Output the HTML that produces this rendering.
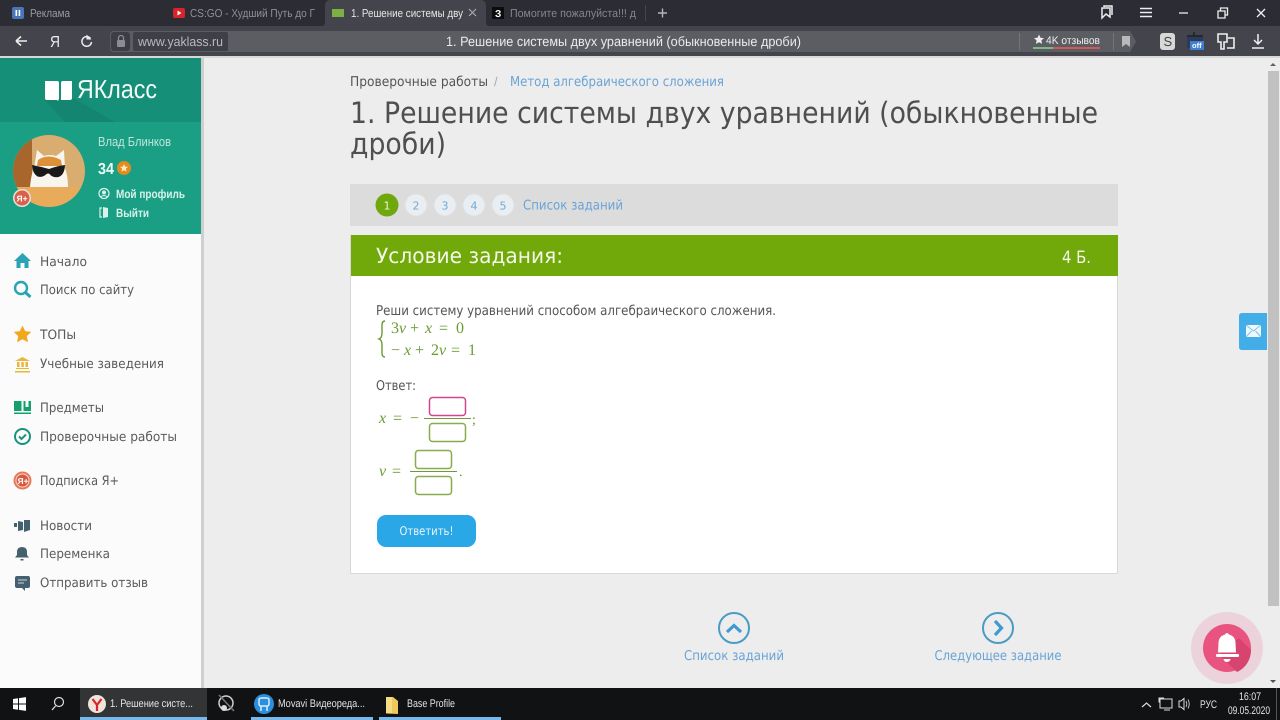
<!DOCTYPE html>
<html><head><meta charset="utf-8"><style>
html,body{margin:0;padding:0;width:1280px;height:720px;overflow:hidden;background:#ededed}
svg{display:block;filter:blur(.3px);text-rendering:geometricPrecision}
text{font-family:"Liberation Sans",sans-serif}
.d{font-family:"DejaVu Sans",sans-serif}
.m{font-family:"Liberation Serif",serif;font-style:italic;fill:#6c9a33}
.r{font-family:"Liberation Serif",serif;fill:#6c9a33}
</style></head><body>
<svg width="1280" height="720" viewBox="0 0 1280 720" xmlns="http://www.w3.org/2000/svg">
<rect width="1280" height="720" fill="#ededed"/>
<!-- tab strip -->
<rect width="1280" height="26" fill="#2c2d34"/>
<rect y="26" width="1280" height="31" fill="#44454c"/>
<rect y="56" width="1280" height="2" fill="#d8d8d8"/>
<path d="M322 26q3 0 3-4V6q0-6 6-6h149q6 0 6 6v16q0 4 3 4z" fill="#44454c"/>
<rect x="12" y="7" width="12" height="12" rx="2" fill="#4a76b8"/><rect x="15.500" y="10" width="1.600" height="6" fill="#fff"/><rect x="18.600" y="10" width="1.600" height="6" fill="#fff"/>
<text x="30" y="17" font-size="11.500" fill="#9a9ba0" textLength="40" lengthAdjust="spacingAndGlyphs">Реклама</text>
<rect x="173" y="8" width="12" height="10" rx="2" fill="#d8232a"/><path d="M177.500 10.500l4 2.500-4 2.500z" fill="#fff"/>
<text x="190" y="17" font-size="11.500" fill="#8f9095" textLength="125" lengthAdjust="spacingAndGlyphs">CS:GO - Худший Путь до Г</text>
<rect x="332" y="9" width="12" height="8" fill="#7db043"/>
<text x="351" y="17" font-size="11.500" fill="#e6e6e6" textLength="112" lengthAdjust="spacingAndGlyphs">1. Решение системы дву</text>
<path d="M469 9l7 7M476 9l-7 7" stroke="#aaa" stroke-width="1.200"/>
<rect x="492" y="7" width="12" height="12" fill="#0c0c0c"/><text x="495" y="17" font-size="10" font-weight="bold" fill="#fff">З</text>
<text x="510" y="17" font-size="11.500" fill="#85868b" textLength="126" lengthAdjust="spacingAndGlyphs">Помогите пожалуйста!!! д</text>
<rect x="645" y="5" width="1" height="16" fill="#44454c"/>
<path d="M658 13h9M662.500 8.500v9" stroke="#b5b5b8" stroke-width="1.400"/>
<path d="M1102 18V8h8v9l-4-3-4 4zM1104 7V6h8v9" fill="none" stroke="#eee" stroke-width="1.500"/>
<path d="M1140 8.500h12M1140 12.500h12M1140 16.500h12" stroke="#eee" stroke-width="1.500"/>
<path d="M1179 13h9" stroke="#eee" stroke-width="1.300"/>
<path d="M1218 11h7v7h-7zM1220.500 11V8h7v7h-2.500" fill="none" stroke="#eee" stroke-width="1.300"/>
<path d="M1257 9l8 8M1265 9l-8 8" stroke="#eee" stroke-width="1.300"/>
<!-- toolbar -->
<path d="M16 41h11M16 41l5-4.500M16 41l5 4.500" stroke="#eee" stroke-width="1.600" fill="none"/>
<text x="50" y="47" font-size="16" fill="#eee" textLength="10" lengthAdjust="spacingAndGlyphs">Я</text>
<path d="M90.500 38.500a4.800 4.800 0 1 0 1 3.500" fill="none" stroke="#eee" stroke-width="1.500"/><path d="M86.500 34.500v5h5z" fill="#eee"/>
<path d="M110 35q0-4 4-4h1016l6 10.500-6 10.500H114q-4 0-4-4z" fill="#5c5d63"/>
<rect x="111" y="32" width="19" height="19" rx="3" fill="#3d3e45"/>
<rect x="117" y="40" width="8" height="7" rx="1" fill="#8c8d92"/><path d="M118.500 40v-2a2.500 2.500 0 0 1 5 0v2" fill="none" stroke="#8c8d92" stroke-width="1.300"/>
<rect x="133" y="32" width="95" height="19" rx="2" fill="#3f4047"/>
<text x="138" y="46" font-size="13" fill="#b9babd" textLength="85" lengthAdjust="spacingAndGlyphs">www.yaklass.ru</text>
<text x="446" y="46" font-size="13.500" fill="#eaeaea" textLength="355" lengthAdjust="spacingAndGlyphs">1. Решение системы двух уравнений (обыкновенные дроби)</text>
<rect x="1019" y="33" width="1" height="17" fill="#74757a"/>
<path d="M1039 34.500l1.500 3.200 3.500.4-2.600 2.300.7 3.500-3.100-1.700-3.100 1.700.7-3.500-2.600-2.300 3.500-.4z" fill="#eee"/>
<text x="1046" y="44" font-size="11" fill="#eee" textLength="54" lengthAdjust="spacingAndGlyphs">4K отзывов</text>
<rect x="1033" y="47" width="20" height="2" fill="#7cb98a"/><rect x="1053" y="47" width="47" height="2" fill="#d05a5a"/>
<rect x="1113" y="33" width="1" height="17" fill="#74757a"/>
<path d="M1122 36h8v11l-4-3-4 3z" fill="#b8b9bb"/>
<rect x="1160" y="33" width="15" height="17" rx="3" fill="#d8d8d8"/><text x="1163.500" y="46" font-size="13" fill="#444">S</text>
<rect x="1187" y="35" width="16" height="13" rx="1" fill="#2d3a57"/><rect x="1190" y="41" width="14" height="9" fill="#3d7fd0"/><text x="1192" y="48" font-size="7.500" font-weight="bold" fill="#fff">off</text><path d="M1194 32v4M1187 36h16" stroke="#222" stroke-width="1.500"/>
<path d="M1218 34h9v8h-3v7h-3v-7h-3zM1228 38h6v10h-7" fill="none" stroke="#eee" stroke-width="1.600"/>
<path d="M1258 34v10M1254 40l4 4 4-4M1252 48h12" fill="none" stroke="#eee" stroke-width="1.500"/>
<!-- sidebar -->
<rect y="58" width="201" height="630" fill="#fbfbfb"/>
<rect x="201" y="58" width="3" height="630" fill="#cfcfcf"/>
<rect y="58" width="201" height="64" fill="#168f78"/>
<path d="M45 100l20 22h50L73 98z" fill="#13806c" opacity=".7"/>
<rect y="122" width="201" height="112" fill="#1a9f84"/>
<path d="M45 81h12q2 0 2 2v16l-1 2-1-1H47q-2 0-2-2zM61 83q0-2 2-2h9v17q0 2-2 2H61z" fill="#fff"/>
<text x="77" y="98" font-size="26" fill="#f4fbf9" textLength="80" lengthAdjust="spacingAndGlyphs">ЯКласс</text>
<!-- avatar -->
<defs><clipPath id="av"><circle cx="49" cy="171" r="36"/></clipPath></defs>
<g clip-path="url(#av)">
<rect x="13" y="135" width="72" height="72" fill="#d9ac70"/>
<rect x="13" y="135" width="19" height="52" fill="#a8662c"/>
<rect x="13" y="187" width="72" height="20" fill="#e8ab5c"/>
<path d="M30 187q1-12 4-19l3-18 7 6q6-2 12 0l8-6 1 18q3 8 3 19z" fill="#f8f4ee"/>
<path d="M38 160q10-7 23 0l1 6H37z" fill="#dd9038"/>
<path d="M32 165q8 1.500 17 4 8-3 16-4-.5 10-6.500 12-6 1-9-3-1-1-3 0-4 4-9 2.500-5-3-5.500-11.500z" fill="#191919"/>
</g>
<circle cx="22" cy="198" r="9" fill="#e8e0d8"/><circle cx="22" cy="198" r="7.500" fill="#d9604a"/><text x="16.500" y="201.500" font-size="8.500" font-weight="bold" fill="#fff">Я+</text>
<text x="98" y="146" font-size="13" fill="#bfe5da" textLength="73" lengthAdjust="spacingAndGlyphs">Влад Блинков</text>
<text x="98" y="174" font-size="16" font-weight="bold" fill="#eafff8" textLength="16" lengthAdjust="spacingAndGlyphs">34</text>
<circle cx="124" cy="168" r="7" fill="#e08c1f"/><path d="M124 164l1.200 2.600 2.800.3-2.100 1.900.6 2.800-2.500-1.400-2.500 1.400.6-2.800-2.100-1.900 2.800-.3z" fill="#fde9c0"/>
<circle cx="104" cy="193.500" r="5" fill="none" stroke="#d8f2ea" stroke-width="1.200"/><circle cx="104" cy="192.500" r="2" fill="#d8f2ea"/><path d="M100.500 197q3.500-3 7 0" stroke="#d8f2ea" fill="none"/>
<text x="116" y="198" font-size="12" font-weight="bold" fill="#d8f2ea" textLength="69" lengthAdjust="spacingAndGlyphs">Мой профиль</text>
<path d="M102 208h-2v9h2" fill="none" stroke="#d8f2ea" stroke-width="1.200"/><path d="M103 207l5 1v9l-5 1z" fill="#d8f2ea"/>
<text x="116" y="217" font-size="12" font-weight="bold" fill="#d8f2ea" textLength="33" lengthAdjust="spacingAndGlyphs">Выйти</text>
<!-- nav -->
<g font-size="13" fill="#5a5a5a">
<text class="d" x="40" y="266" textLength="47" lengthAdjust="spacingAndGlyphs">Начало</text>
<text class="d" x="40" y="294" textLength="94" lengthAdjust="spacingAndGlyphs">Поиск по сайту</text>
<text class="d" x="40" y="339" textLength="36" lengthAdjust="spacingAndGlyphs">ТОПы</text>
<text class="d" x="40" y="368" textLength="124" lengthAdjust="spacingAndGlyphs">Учебные заведения</text>
<text class="d" x="40" y="412" textLength="64" lengthAdjust="spacingAndGlyphs">Предметы</text>
<text class="d" x="40" y="441" textLength="137" lengthAdjust="spacingAndGlyphs">Проверочные работы</text>
<text class="d" x="40" y="485" textLength="79" lengthAdjust="spacingAndGlyphs">Подписка Я+</text>
<text class="d" x="40" y="530" textLength="52" lengthAdjust="spacingAndGlyphs">Новости</text>
<text class="d" x="40" y="558" textLength="70" lengthAdjust="spacingAndGlyphs">Переменка</text>
<text class="d" x="40" y="587" textLength="108" lengthAdjust="spacingAndGlyphs">Отправить отзыв</text>
</g>
<path d="M14 261l8.500-8 8.500 8h-2.500v7h-4v-5h-4v5h-4v-7z" fill="#2aa3b4"/>
<circle cx="21" cy="288" r="6" fill="none" stroke="#2aa3b4" stroke-width="2.400"/><path d="M25.500 292.500l5 4.500" stroke="#2aa3b4" stroke-width="3"/>
<path d="M22.500 325.500l2.700 5.600 6.100.8-4.500 4.200 1.200 6.100-5.500-3-5.500 3 1.200-6.100-4.500-4.200 6.100-.8z" fill="#f2a81d"/>
<path d="M15 361l7.500-4 7.500 4zM16 369h13v-1H16zM15 371h15v1.500H15zM17 362h2.500v5H17zM21.300 362h2.500v5h-2.500zM25.500 362H28v5h-2.500z" fill="#e8b73a"/>
<path d="M14 401h7.500v10H14zM23.500 401h2v6h3v-6H31v10h-7.500z" fill="#14a06c"/><path d="M14 412.500h17v1.500H14z" fill="#14a06c"/>
<circle cx="22.500" cy="436.500" r="7.500" fill="none" stroke="#17947b" stroke-width="2"/><path d="M19 436.500l2.500 2.500 4.500-4.500" fill="none" stroke="#17947b" stroke-width="2"/>
<circle cx="22.500" cy="480.500" r="9" fill="#e37b5b"/><circle cx="22.500" cy="480.500" r="6.500" fill="#d8573e" stroke="#f5d5c8"/><text x="17.500" y="484" font-size="8.500" font-weight="bold" fill="#fff">Я+</text>
<path d="M14 523h3v4h-3zM18 521l5 1v8l-5 1zM24 520h6v10l-6 2z" fill="#45606e"/>
<path d="M22 547q5 0 5 5v3l2 2.500H15l2-2.500v-3q0-5 5-5z" fill="#45606e"/><rect x="20.500" y="559" width="3" height="1.500" fill="#45606e"/>
<path d="M17 576h11q2 0 2 2v8q0 2-2 2h-3v3l-3-3h-5q-2 0-2-2v-8q0-2 2-2z" fill="#45606e"/><path d="M18 580h9M18 583h6" stroke="#cdd6da" stroke-width="1"/>
<!-- breadcrumbs / title -->
<text x="350" y="86" class="d" font-size="13.500" fill="#555" textLength="138" lengthAdjust="spacingAndGlyphs">Проверочные работы</text>
<text x="494" y="86" font-size="13" fill="#aaa">/</text>
<text x="510" y="86" class="d" font-size="13.500" fill="#6aa3d5" textLength="214" lengthAdjust="spacingAndGlyphs">Метод алгебраического сложения</text>
<text x="350" y="123" class="d" font-size="29.500" fill="#4f4f4f" textLength="748" lengthAdjust="spacingAndGlyphs">1. Решение системы двух уравнений (обыкновенные</text>
<text x="350" y="154" class="d" font-size="29.500" fill="#4f4f4f" textLength="96" lengthAdjust="spacingAndGlyphs">дроби)</text>
<!-- pager -->
<rect x="350" y="184" width="768" height="42" fill="#dcdcdc"/>
<circle cx="387" cy="205" r="11.500" fill="#6fa80c"/>
<text x="387" y="209.500" class="d" font-size="11" fill="#e8f5cf" text-anchor="middle">1</text>
<g fill="#e9eef3" stroke="#e0e0e0"><circle cx="416" cy="205" r="11"/><circle cx="445" cy="205" r="11"/><circle cx="474" cy="205" r="11"/><circle cx="503" cy="205" r="11"/></g>
<g font-size="11" fill="#72a8d8" text-anchor="middle"><text x="416" y="209.500" class="d">2</text><text x="445" y="209.500" class="d">3</text><text x="474" y="209.500" class="d">4</text><text x="503" y="209.500" class="d">5</text></g>
<text x="523" y="209.500" class="d" font-size="13.500" fill="#6aa3d5" textLength="100" lengthAdjust="spacingAndGlyphs">Список заданий</text>
<!-- card -->
<rect x="350.500" y="235.500" width="767" height="338" fill="#fff" stroke="#d8d8d8"/>
<rect x="351" y="235" width="767" height="41" fill="#71a80a"/>
<text x="376" y="263" class="d" font-size="21" fill="#f4f8e8" textLength="187" lengthAdjust="spacingAndGlyphs">Условие задания:</text>
<text x="1062" y="263" class="d" font-size="17" fill="#f4f8e8" textLength="29" lengthAdjust="spacingAndGlyphs">4 Б.</text>
<text x="376" y="315" class="d" font-size="13.500" fill="#555" textLength="400" lengthAdjust="spacingAndGlyphs">Реши систему уравнений способом алгебраического сложения.</text>
<path d="M385 321q-3 0-3 4v8q0 5-3 6 3 1 3 6v8q0 4 3 4" fill="none" stroke="#6c9a33" stroke-width="1.400"/>
<g font-size="16">
<text x="391" y="333" class="r">3</text>
<text x="399" y="333" class="m">v</text>
<text x="410" y="333" class="r">+</text>
<text x="425" y="333" class="m">x</text>
<text x="439" y="333" class="r">=</text>
<text x="456" y="333" class="r">0</text>
<text x="391" y="355" class="r">−</text>
<text x="404" y="355" class="m">x</text>
<text x="415" y="355" class="r">+</text>
<text x="431" y="355" class="r">2</text>
<text x="439" y="355" class="m">v</text>
<text x="451" y="355" class="r">=</text>
<text x="468" y="355" class="r">1</text>
<text x="379" y="423" class="m">x</text>
<text x="393" y="423" class="r">=</text>
<text x="410" y="423" class="r">−</text>
<text x="379" y="476" class="m">v</text>
<text x="392" y="476" class="r">=</text>
</g>
<text x="376" y="390" class="d" font-size="13.500" fill="#555" textLength="40" lengthAdjust="spacingAndGlyphs">Ответ:</text>
<rect x="424" y="418" width="47" height="1" fill="#6c9a33"/>
<rect x="429.500" y="397.500" width="36" height="18" rx="3" fill="#fff" stroke="#d2458f" stroke-width="1.500"/>
<rect x="429.500" y="423.500" width="36" height="18" rx="3" fill="#fff" stroke="#88ab4e" stroke-width="1.500"/>
<text x="472" y="424" font-size="14" class="r">;</text>
<rect x="410" y="471" width="47" height="1" fill="#6c9a33"/>
<rect x="415.500" y="450.500" width="36" height="18" rx="3" fill="#fff" stroke="#88ab4e" stroke-width="1.500"/>
<rect x="415.500" y="476.500" width="36" height="18" rx="3" fill="#fff" stroke="#88ab4e" stroke-width="1.500"/>
<text x="459" y="476" font-size="14" class="r">.</text>
<rect x="377" y="515" width="99" height="32" rx="9" fill="#2aa7e6"/>
<text x="426.500" y="535" class="d" font-size="12" fill="#eaf6fd" text-anchor="middle" textLength="54" lengthAdjust="spacingAndGlyphs">Ответить!</text>
<!-- nav links -->
<circle cx="734" cy="628" r="15" fill="none" stroke="#4a9cc4" stroke-width="2"/>
<path d="M727 632l7-6.500 7 6.500" fill="none" stroke="#3d9ad3" stroke-width="3.200"/>
<text x="734" y="660" class="d" font-size="13.500" fill="#6aa3d5" text-anchor="middle" textLength="100" lengthAdjust="spacingAndGlyphs">Список заданий</text>
<circle cx="998" cy="628" r="15" fill="none" stroke="#4a9cc4" stroke-width="2"/>
<path d="M995 621l6.500 7-6.500 7" fill="none" stroke="#3d9ad3" stroke-width="3.200"/>
<text x="998" y="660" class="d" font-size="13.500" fill="#6aa3d5" text-anchor="middle" textLength="127" lengthAdjust="spacingAndGlyphs">Следующее задание</text>
<!-- scrollbar -->
<rect x="1267" y="58" width="13" height="630" fill="#ededed"/>
<rect x="1268" y="71" width="11" height="535" fill="#c1c1c1"/>
<path d="M1270 66l3-3 3 3z" fill="#606060"/><path d="M1270 680l3 3 3-3z" fill="#505050"/>
<!-- mail -->
<path d="M1239 316q0-3 3-3h25v37h-25q-3 0-3-3z" fill="#43ade8"/>
<rect x="1246" y="325" width="15" height="12" rx="1" fill="#eef8fd"/>
<path d="M1246 325l7.500 6 7.500-6M1246 337l5.500-6M1261 337l-5.500-6" fill="none" stroke="#7cc2ea" stroke-width="1"/>
<!-- bell -->
<circle cx="1227" cy="648" r="36" fill="#ecd2da"/>
<circle cx="1227" cy="648" r="24" fill="#e9537f"/>
<path d="M1219 655l18 17a24 24 0 0 0 14-22l-12-12z" fill="#d84470"/>
<path d="M1227 633a2.500 2.500 0 0 1 2 1.500q6 1.500 6.500 8l.5 10h-18l.5-10q.5-6.500 6.500-8a2.500 2.500 0 0 1 2-1.500z" fill="#fff"/>
<rect x="1216" y="654" width="23" height="3" rx="1" fill="#fff"/>
<path d="M1223.500 659h7a3.500 3 0 0 1-7 0z" fill="#fff"/>
<!-- taskbar -->
<rect y="688" width="1280" height="32" fill="#111213"/>
<rect x="80" y="688" width="127" height="32" fill="#333436"/>
<rect x="80" y="717" width="127" height="3" fill="#76b9ed"/>
<rect x="251" y="717" width="122" height="3" fill="#76b9ed"/>
<rect x="379" y="717" width="122" height="3" fill="#76b9ed"/>
<path d="M13 699l5-.7v5.200h-5zM19 698.100l7-1v6.400h-7zM13 704.500h5v5.200l-5-.7zM19 704.500h7v6.400l-7-1z" fill="#fff"/>
<circle cx="59" cy="702" r="4.500" fill="none" stroke="#ddd" stroke-width="1.200"/><path d="M55.500 706l-3.500 4" stroke="#ddd" stroke-width="1.300"/>
<circle cx="97" cy="704" r="9" fill="#f0e4dc"/><path d="M92.500 699l4.500 6v6M101.500 699l-4.500 6" fill="none" stroke="#d8252c" stroke-width="2.200"/>
<text x="110" y="707" font-size="11" fill="#e4e4e4" textLength="83" lengthAdjust="spacingAndGlyphs">1. Решение систе...</text>
<circle cx="226" cy="703" r="7" fill="none" stroke="#cfcfcf" stroke-width="1.500"/><path d="M219 695l15 16" stroke="#777" stroke-width="1.500"/><circle cx="224" cy="708" r="3" fill="#ddd"/>
<circle cx="264" cy="704" r="10" fill="#2a8fdc"/><rect x="259" y="698" width="10" height="8" rx="2" fill="none" stroke="#d8eefc" stroke-width="1.500"/><path d="M261 706v5M267 706v5" stroke="#d8eefc" stroke-width="1.500"/>
<text x="278" y="707" font-size="11" fill="#e4e4e4" textLength="87" lengthAdjust="spacingAndGlyphs">Movavi Видеореда...</text>
<path d="M386 697h7l5 4v13l-12-.5z" fill="#ecc95a"/><rect x="386" y="697" width="6" height="16" fill="#f5dd85"/>
<text x="407" y="707" font-size="11" fill="#e4e4e4" textLength="48" lengthAdjust="spacingAndGlyphs">Base Profile</text>
<path d="M1142 707l4.500-4 4.500 4" fill="none" stroke="#ddd" stroke-width="1.200"/>
<rect x="1160" y="699" width="12" height="9" fill="none" stroke="#ddd"/><path d="M1160 702h-1v-4h5" fill="none" stroke="#ddd"/><path d="M1164 710h6" stroke="#ddd"/>
<path d="M1179 701h2l3-2.500v11l-3-2.500h-2z" fill="none" stroke="#ddd"/><path d="M1186 701q1.500 3 0 6M1188 699.500q2.500 4.500 0 9" fill="none" stroke="#bbb"/>
<text x="1200" y="708" font-size="11" fill="#e4e4e4" textLength="17" lengthAdjust="spacingAndGlyphs">РУС</text>
<text x="1250" y="700" font-size="11" fill="#e4e4e4" text-anchor="middle" textLength="22" lengthAdjust="spacingAndGlyphs">16:07</text>
<text x="1249" y="714" font-size="11" fill="#e4e4e4" text-anchor="middle" textLength="42" lengthAdjust="spacingAndGlyphs">09.05.2020</text>
<rect x="1276" y="688" width="1" height="32" fill="#555"/>
</svg>
</body></html>
